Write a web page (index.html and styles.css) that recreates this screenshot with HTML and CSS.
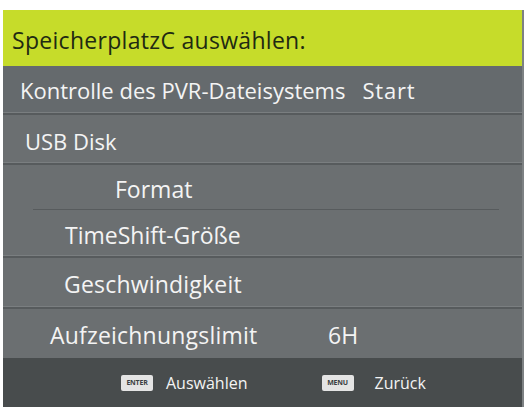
FILE: index.html
```html
<!DOCTYPE html>
<html lang="de">
<head>
  <meta charset="UTF-8">
  <title>Speicherplatz auswählen</title>
  <link rel="stylesheet" href="styles.css">
</head>
<body>
  <div class="screen">
    <header class="title">SpeicherplatzC auswählen:</header>

    <div class="row row-check">
      <span>Kontrolle des PVR-Dateisystems</span>
      <span class="value-start">Start</span>
    </div>
    <div class="row row-disk">USB Disk</div>
    <div class="row row-format">Format</div>
    <div class="row row-timeshift">TimeShift-Größe</div>
    <div class="row row-speed">Geschwindigkeit</div>
    <div class="row row-limit">
      <span class="label-limit">Aufzeichnungslimit</span>
      <span>6H</span>
    </div>

    <footer class="hints">
      <div class="hint hint-enter">
        <span class="key">ENTER</span>
        <span>Auswählen</span>
      </div>
      <div class="hint hint-menu">
        <span class="key">MENU</span>
        <span>Zurück</span>
      </div>
    </footer>
  </div>
</body>
</html>
```

FILE: styles.css
```css
:root {
  --green: #c6dc2a;
  --row: #6b6f71;
  --row-top: #656a6d;
  --line-dark: #575b5d;
  --line-light: #7a7e80;
  --footer: #484c4d;
  --text: #f4f4f4;
}

body {
  margin: 0;
  background: #fff;
  font-family: "Open Sans", "Noto Sans", sans-serif;
  color: var(--text);
}

.screen {
  margin: 10px 2px 0 3px;
  height: 397px;
  display: flex;
  flex-direction: column;
  background: var(--row);
  border-right: 2px solid #7d8183;
}

.title {
  height: 56px;
  background: var(--green);
  color: #1f2a12;
  font-size: 23px;
  letter-spacing: 0.3px;
  padding-left: 9px;
  display: flex;
  align-items: center;
  padding-top: 3px;
  box-sizing: border-box;
}

.row {
  display: flex;
  align-items: center;
  font-size: 23px;
  padding-top: 3px;
  box-sizing: border-box;
  border-bottom: 2px solid var(--line-dark);
  box-shadow: inset 0 -1px 0 var(--line-light);
}

.row-check {
  height: 49px;
  background: var(--row-top);
  padding-left: 17px;
  padding-top: 1px;
  font-size: 22px;
}

.value-start {
  margin-left: 17px;
  letter-spacing: 0.8px;
}

.row-disk {
  height: 50px;
  padding-left: 22px;
  font-size: 22px;
}

.row-format {
  height: 45px;
  padding-left: 112px;
  border-bottom: none;
  box-shadow: none;
  background:
    linear-gradient(var(--line-dark), var(--line-dark)) 30px 100% / 466px 1px no-repeat,
    var(--row);
}

.row-timeshift {
  height: 48px;
  padding-left: 62px;
}

.row-speed {
  height: 51px;
  padding-left: 61px;
  letter-spacing: 0.2px;
}

.row-limit {
  height: 49px;
  padding-left: 47px;
  border-bottom: none;
  box-shadow: none;
  letter-spacing: 0.2px;
}

.label-limit {
  width: 278px;
}

.hints {
  flex: 1;
  background: var(--footer);
  display: flex;
  align-items: center;
  padding-left: 118px;
  gap: 74px;
  font-size: 16px;
}

.hint {
  display: flex;
  align-items: center;
}

.hint-enter {
  gap: 13px;
}

.hint-menu {
  gap: 21px;
}

.key {
  width: 32px;
  height: 16px;
  background: #e4e4e4;
  border-radius: 2px;
  color: #3b3f41;
  font-size: 7px;
  font-weight: bold;
  display: flex;
  align-items: center;
  justify-content: center;
  letter-spacing: -0.2px;
}
```
